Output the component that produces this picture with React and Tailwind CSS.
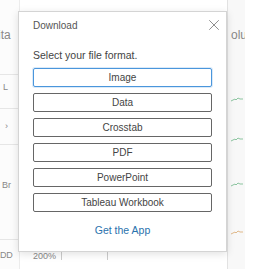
import { X } from "lucide-react";

const FORMATS = ["Image", "Data", "Crosstab", "PDF", "PowerPoint", "Tableau Workbook"];

const Spark = ({ color = "#8cc5a0" }) => (
  <svg width="12" height="5" viewBox="0 0 12 5">
    <polyline points="0,4 2,3 4,2 5,3 7,1 9,2 12,2" fill="none" stroke={color} strokeWidth="1" />
  </svg>
);

const App = () => {
  return (
    <div className="relative w-[257px] h-[269px] overflow-hidden bg-white font-['Liberation_Sans',Arial,sans-serif] text-[#333]">
      {/* worksheet behind the dialog */}
      <div className="flex h-full">
        <div className="w-[20px] bg-[#fcfcfc] border-r border-[#ececec] flex flex-col text-[#888]">
          <div className="h-[28px]" />
          <div className="text-[12px] leading-[14px] -ml-[2px]">ita</div>
          <div className="h-[33px] border-b border-[#e6e6e6]" />
          <div className="text-[9px] pl-[3px] pt-[6px] h-[34px] border-b border-[#e6e6e6]">L</div>
          <div className="text-[9px] pl-[5px] pt-[11px] h-[36px] border-b border-[#e6e6e6]">›</div>
          <div className="text-[9px] pl-[2px] pt-[34px] h-[95px] border-b border-[#e6e6e6]">Br</div>
          <div className="text-[9px] pt-[9px] tracking-tight">DD</div>
        </div>
        <div className="flex-1 flex flex-col">
          <div className="flex-1" />
          <div className="h-[30px] border-t border-[#e6e6e6] flex items-start gap-[5px] pl-[13px] pt-[10px] text-[9px] text-[#888]">
            <span>200%</span>
            <span className="w-px h-[10px] bg-[#ccc]" />
            <span className="ml-[40px] w-px h-[10px] bg-[#ccc]" />
          </div>
        </div>
        <div className="w-[18px] bg-[#f8f8f8] border-l border-[#e2e2e2] flex flex-col items-start pl-[3px]">
          <div className="h-[28px]" />
          <div className="text-[12px] leading-[14px] text-[#888]">olu</div>
          <div className="h-[55px]" />
          <Spark />
          <div className="h-[35px]" />
          <Spark />
          <div className="h-[40px]" />
          <Spark />
          <div className="h-[43px]" />
          <Spark color="#e0b98a" />
        </div>
        <div className="w-[12px] bg-white" />
      </div>

      {/* download dialog */}
      <div className="absolute left-[18px] top-[11px] w-[209px] h-[241px] bg-white border border-[#d4d4d4] shadow-[0_2px_8px_rgba(0,0,0,0.12)] flex flex-col">
        <div className="flex items-center justify-between pl-[14px] pr-[3px] h-[26px]">
          <span className="text-[10px] text-[#555]">Download</span>
          <X size={18} strokeWidth={1.1} className="text-[#777]" />
        </div>
        <div className="px-[14px] pt-[11px] flex flex-col">
          <p className="text-[10.5px] text-[#444] leading-[12px]">Select your file format.</p>
          <div className="mt-[7px] flex flex-col gap-[6px]">
            {FORMATS.map((f, i) => (
              <button
                key={f}
                className={
                  "h-[19px] w-[179px] rounded-[2px] border text-[10px] text-[#444] bg-white " +
                  (i === 0 ? "border-[#4a96dc] shadow-[0_0_0_1px_rgba(74,150,220,0.2)]" : "border-[#666]")
                }
              >
                {f}
              </button>
            ))}
          </div>
          <div className="mt-[11px] text-center text-[10.5px] font-medium text-[#2a72ad]">Get the App</div>
        </div>
      </div>
    </div>
  );
};
export default App;
